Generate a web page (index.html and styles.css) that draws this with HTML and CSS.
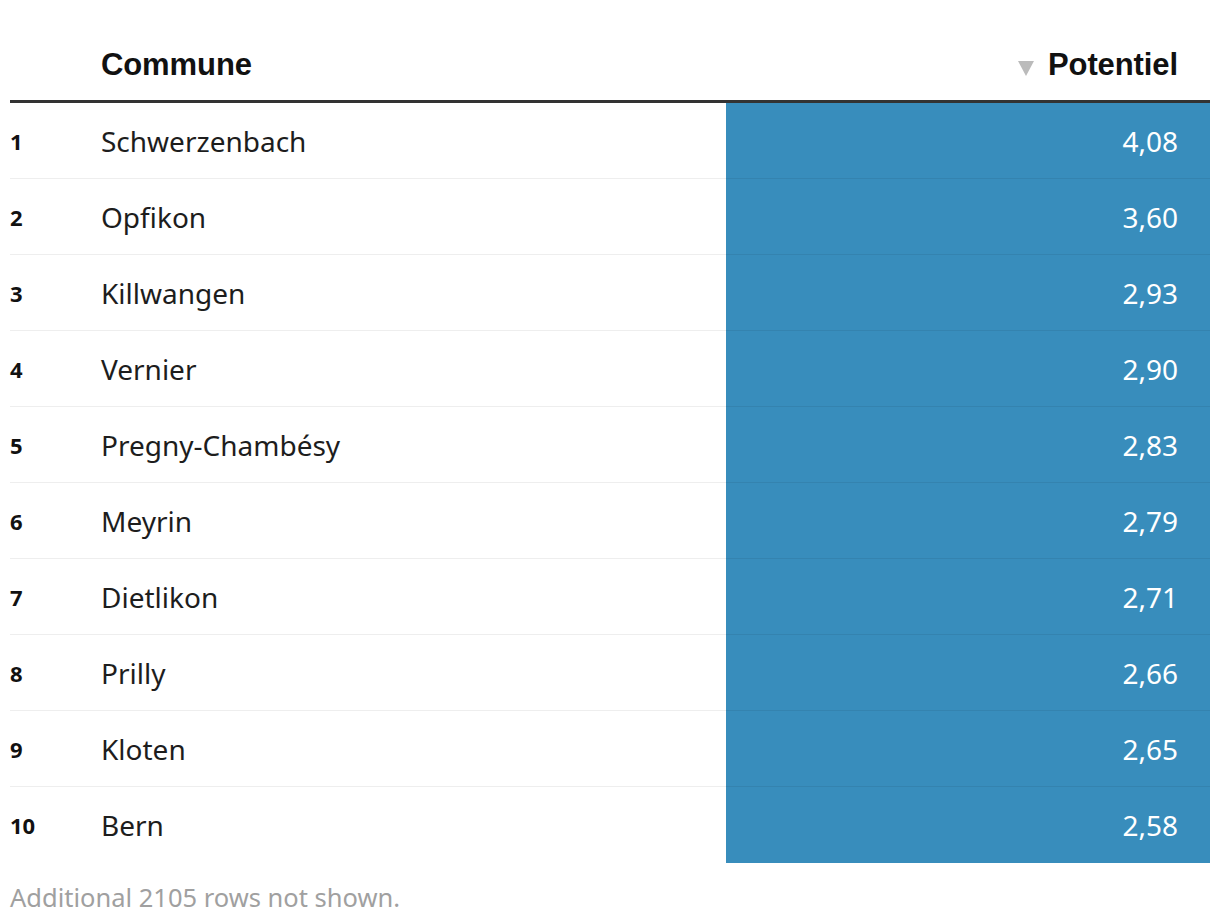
FILE: index.html
```html
<!DOCTYPE html>
<html lang="fr">
<head>
<meta charset="utf-8">
<link rel="stylesheet" href="styles.css">
</head>
<body>
<div class="wrap">
<table class="tbl">
  <thead>
    <tr>
      <th class="c-rank"></th>
      <th class="c-name">Commune</th>
      <th class="c-val"><span class="sort"></span>Potentiel</th>
    </tr>
  </thead>
  <tbody>
    <tr><td class="c-rank">1</td><td class="c-name">Schwerzenbach</td><td class="c-val">4,08</td></tr>
    <tr><td class="c-rank">2</td><td class="c-name">Opfikon</td><td class="c-val">3,60</td></tr>
    <tr><td class="c-rank">3</td><td class="c-name">Killwangen</td><td class="c-val">2,93</td></tr>
    <tr><td class="c-rank">4</td><td class="c-name">Vernier</td><td class="c-val">2,90</td></tr>
    <tr><td class="c-rank">5</td><td class="c-name">Pregny-Chambésy</td><td class="c-val">2,83</td></tr>
    <tr><td class="c-rank">6</td><td class="c-name">Meyrin</td><td class="c-val">2,79</td></tr>
    <tr><td class="c-rank">7</td><td class="c-name">Dietlikon</td><td class="c-val">2,71</td></tr>
    <tr><td class="c-rank">8</td><td class="c-name">Prilly</td><td class="c-val">2,66</td></tr>
    <tr><td class="c-rank">9</td><td class="c-name">Kloten</td><td class="c-val">2,65</td></tr>
    <tr><td class="c-rank">10</td><td class="c-name">Bern</td><td class="c-val">2,58</td></tr>
  </tbody>
</table>
<p class="note">Additional 2105 rows not shown.</p>
</div>
</body>
</html>
```
FILE: styles.css
```css
html, body {
  margin: 0;
  padding: 0;
  background: #fff;
}
body {
  font-family: "Noto Sans", "Liberation Sans", sans-serif;
  color: #1d1d1d;
}
.wrap {
  padding: 0 10px;
}
.tbl {
  width: 1200px;
  border-collapse: collapse;
  table-layout: fixed;
}
.tbl th {
  height: 101px;
  padding: 0;
  padding-top: 30px;
  vertical-align: middle;
  font-family: "Liberation Sans", Arial, sans-serif;
  font-weight: 700;
  font-size: 31px;
  letter-spacing: -0.1px;
  color: #111;
  text-align: left;
  border-bottom: 3px solid #333;
  box-sizing: border-box;
}
.tbl th.c-val {
  text-align: right;
  padding-right: 32px;
}
.sort {
  display: inline-block;
  width: 0;
  height: 0;
  border-left: 8px solid transparent;
  border-right: 8px solid transparent;
  border-top: 15px solid #bbb;
  margin-right: 14px;
  vertical-align: -1px;
}
.c-rank { width: 91px; }
.c-val { width: 484px; }
.tbl td {
  height: 74px;
  padding: 0;
  padding-top: 1px;
  box-sizing: content-box;
  border-bottom: 1px solid rgba(0, 0, 0, 0.065);
  font-size: 28px;
  vertical-align: middle;
}
.tbl tbody tr:last-child td {
  border-bottom: none;
  height: 75px;
}
.tbl td.c-rank {
  font-weight: 700;
  font-size: 22px;
  color: #111;
}
.tbl td.c-val {
  background: #388dbc;
  color: #fff;
  text-align: right;
  padding-right: 32px;
}
.note {
  margin: 17px 0 0;
  font-size: 25.5px;
  color: #a0a0a0;
}
```
